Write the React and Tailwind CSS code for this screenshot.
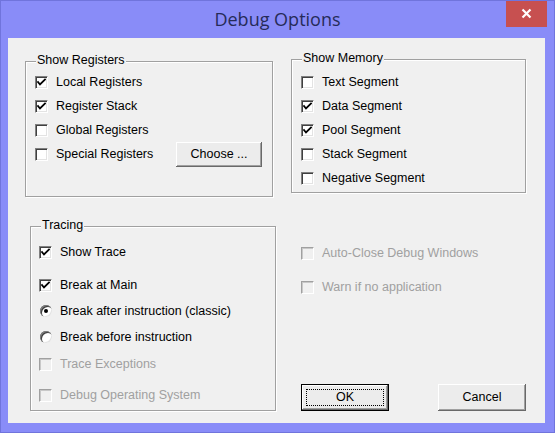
import React from 'react'

const font = { fontFamily: '"Liberation Sans", Arial, sans-serif' }

function CheckMark({ disabled }) {
  return (
    <svg width="9" height="9" viewBox="0 0 9 9" className="block">
      <path d="M1 4 L3 6.5 L8 1.5" fill="none" stroke={disabled ? '#a0a0a0' : '#000'} strokeWidth="1.8" strokeLinecap="square" />
    </svg>
  )
}

function CheckBox({ label, checked, disabled, gap = 'gap-[8px]' }) {
  return (
    <div className={`flex h-[24px] items-center ${gap}`}>
      <div
        className={`flex h-[13px] w-[13px] shrink-0 items-center justify-center border-t border-l border-r border-b ${
          disabled
            ? 'border-t-[#a0a0a0] border-l-[#a0a0a0] border-r-[#fff] border-b-[#fff] bg-[#f0f0f0] shadow-[inset_1px_1px_0_#c8c8c8]'
            : 'border-t-[#808080] border-l-[#808080] border-r-[#fff] border-b-[#fff] bg-white shadow-[inset_1px_1px_0_#404040,inset_-1px_-1px_0_#e3e3e3]'
        }`}
      >
        {checked && <CheckMark disabled={disabled} />}
      </div>
      <span className={`whitespace-nowrap text-[12.5px] leading-none ${disabled ? 'text-[#a0a0a0]' : 'text-black'}`}>{label}</span>
    </div>
  )
}

function Radio({ label, checked }) {
  return (
    <div className="flex h-[24px] items-center gap-[8px]">
      <div className="relative flex h-[12px] w-[12px] shrink-0 items-center justify-center rounded-full bg-white shadow-[inset_1px_1px_0_#808080,inset_2px_2px_0_#404040,inset_-1px_-1px_0_#e3e3e3] ml-[1px]">
        {checked && <div className="h-[4px] w-[4px] rounded-full bg-black" />}
      </div>
      <span className="whitespace-nowrap text-[12.5px] leading-none text-black">{label}</span>
    </div>
  )
}

function Group({ title, className, children }) {
  return (
    <div className={`relative border border-[#a0a0a0] shadow-[inset_1px_1px_0_#fff,1px_1px_0_#fff] ${className}`}>
      <span className="absolute -top-[8px] left-[10px] bg-[#f0f0f0] px-[1px] text-[12.5px] leading-none text-black">{title}</span>
      {children}
    </div>
  )
}

function Button({ children, primary, className = '' }) {
  return (
    <div
      className={`flex items-center justify-center bg-[#ececec] text-[12.5px] text-black ${
        primary
          ? 'border border-black shadow-[inset_-1px_-1px_0_#696969,inset_1px_1px_0_#fff,inset_-2px_-2px_0_#a0a0a0]'
          : 'shadow-[inset_-1px_-1px_0_#696969,inset_1px_1px_0_#fff,inset_-2px_-2px_0_#a0a0a0]'
      } ${className}`}
    >
      {primary ? (
        <div className="flex h-[calc(100%-8px)] w-[calc(100%-8px)] items-center justify-center border border-dotted border-black">{children}</div>
      ) : (
        children
      )}
    </div>
  )
}

export default function App() {
  return (
    <div className="h-[433px] w-[555px] overflow-hidden border border-[#7074dc] bg-[#898cf8]" style={font}>
      {/* Title bar */}
      <div className="relative flex h-[37px] items-center justify-center">
        <span className="text-[18px] text-[#262b58]" style={{ fontFamily: '"Open Sans", "Noto Sans", sans-serif' }}>
          Debug Options
        </span>
        <div className="absolute -top-[1px] right-[7px] flex h-[27px] w-[41px] items-center justify-center bg-[#c75050]">
          <svg width="11" height="11" viewBox="0 0 11 11">
            <path d="M1.5 1.5 L9.5 9.5 M9.5 1.5 L1.5 9.5" stroke="#fff" strokeWidth="2.2" />
          </svg>
        </div>
      </div>

      {/* Client area */}
      <div className="ml-[7px] h-[385px] w-[537px] bg-[#f0f0f0]">
        <div className="flex items-start">
          <Group title="Show Registers" className="ml-[17px] mt-[23px] h-[136px] w-[248px]">
            <div className="flex flex-col pl-[9px] pr-[10px] pt-[8px]">
              <CheckBox label="Local Registers" checked />
              <CheckBox label="Register Stack" checked />
              <CheckBox label="Global Registers" />
              <div className="flex items-center justify-between">
                <CheckBox label="Special Registers" />
                <Button className="h-[25px] w-[86px]">Choose ...</Button>
              </div>
            </div>
          </Group>

          <Group title="Show Memory" className="ml-[18px] mt-[21px] h-[134px] w-[235px]">
            <div className="flex flex-col pl-[9px] pt-[10px]">
              <CheckBox label="Text Segment" />
              <CheckBox label="Data Segment" checked />
              <CheckBox label="Pool Segment" checked />
              <CheckBox label="Stack Segment" />
              <CheckBox label="Negative Segment" />
            </div>
          </Group>
        </div>

        <div className="mt-[29px] flex items-start">
          <Group title="Tracing" className="ml-[22px] h-[185px] w-[246px]">
            <div className="flex flex-col pl-[8px] pt-[13px]">
              <CheckBox label="Show Trace" checked />
              <div className="mt-[9px]">
                <CheckBox label="Break at Main" checked />
              </div>
              <div className="mt-[2px]">
                <Radio label="Break after instruction (classic)" checked />
              </div>
              <div className="mt-[2px]">
                <Radio label="Break before instruction" />
              </div>
              <div className="mt-[3px]">
                <CheckBox label="Trace Exceptions" disabled />
              </div>
              <div className="mt-[7px]">
                <CheckBox label="Debug Operating System" disabled />
              </div>
            </div>
          </Group>

          <div className="ml-[25px] flex flex-col">
            <div className="mt-[15px]">
              <CheckBox label="Auto-Close Debug Windows" disabled />
            </div>
            <div className="mt-[10px]">
              <CheckBox label="Warn if no application" disabled />
            </div>
            <div className="mt-[85px] flex gap-[49px]">
              <Button primary className="h-[27px] w-[88px]">OK</Button>
              <Button className="h-[27px] w-[88px]">Cancel</Button>
            </div>
          </div>
        </div>
      </div>
    </div>
  )
}
